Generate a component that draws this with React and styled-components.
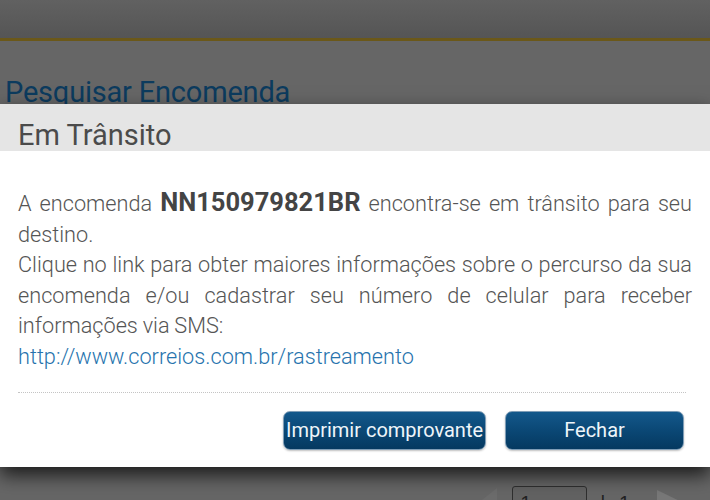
import React from 'react'
import styled, { createGlobalStyle } from 'styled-components'

const GlobalStyle = createGlobalStyle`
  html, body {
    margin: 0;
    padding: 0;
    background: #666666;
  }
  * {
    box-sizing: border-box;
  }
`

const Page = styled.div`
  position: relative;
  width: 710px;
  height: 500px;
  overflow: hidden;
  display: flex;
  flex-direction: column;
  background: #666666;
  font-family: Roboto, "Liberation Sans", sans-serif;
`

const TopBar = styled.div`
  height: 41px;
  flex-shrink: 0;
  background: linear-gradient(#616161, #555555);
  border-bottom: 3px solid #6b5819;
`

const PageTitle = styled.h1`
  margin: 35px 0 0 5px;
  font-size: 29px;
  line-height: 32px;
  font-weight: 400;
  color: #0c3b5e;
  letter-spacing: -0.2px;
`

const Pager = styled.div`
  margin-top: 376px;
  height: 40px;
  display: flex;
  align-items: flex-start;
  justify-content: flex-end;
  padding-right: 20px;
  font-family: "Liberation Sans", Arial, sans-serif;
  color: #222;
`

const Arrow = styled.div`
  width: 0;
  height: 0;
  margin-top: ${p => p.dir === 'left' ? 4 : 6}px;
  border-top: 16px solid transparent;
  border-bottom: 16px solid transparent;
  ${p => p.dir === 'left'
    ? 'border-right: 20px solid #6c6c6c;'
    : 'border-left: 33px solid #787878;'}
`

const PageInput = styled.div`
  width: 75px;
  height: 30px;
  margin: 2px 13px 0 15px;
  border: 1px solid #2f2f2f;
  border-radius: 3px;
  padding: 5px 0 0 7px;
  font-size: 20px;
  background: #626262;
`

const PageCount = styled.span`
  margin: 8px 27px 0 0;
  font-size: 20px;
  word-spacing: 8px;
`

const Dialog = styled.div`
  position: absolute;
  top: 104px;
  left: 0;
  right: 0;
  background: #ffffff;
  box-shadow: 0 8px 18px rgba(0, 0, 0, 0.75);
`

const DialogHeader = styled.div`
  height: 47px;
  padding: 15px 18px 0;
  background: #e5e5e5;
`

const DialogTitle = styled.h2`
  margin: 0;
  font-size: 29px;
  line-height: 32px;
  font-weight: 400;
  color: #4b4b4b;
`

const DialogBody = styled.div`
  padding: 36px 18px 0;
  font-size: 21.7px;
  line-height: 30.5px;
  font-weight: 300;
  word-spacing: -0.5px;
  color: #555555;
  text-align: justify;
`

const Paragraph = styled.p`
  margin: 0;
`

const Code = styled.strong`
  font-size: 25.5px;
  font-weight: 700;
  color: #444444;
`

const TrackLink = styled.a`
  color: #2673ad;
  text-decoration: none;
`

const Footer = styled.div`
  margin: 20px 24px 0 18px;
  border-top: 1px dotted #c4c4c4;
  padding: 18px 2px 17px 0;
  display: flex;
  justify-content: flex-end;
  gap: 19px;
`

const Button = styled.button`
  width: ${p => p.w}px;
  height: 39px;
  padding: 0 0 2px;
  border: 1px solid #7f9db6;
  border-radius: 7px;
  background: linear-gradient(#13588b, #0a4673 55%, #053960);
  box-shadow: 0 1px 2px rgba(0, 0, 0, 0.25);
  color: #eef5fa;
  font-family: Roboto, "Liberation Sans", sans-serif;
  font-size: 20px;
  font-weight: 400;
  white-space: nowrap;
  cursor: pointer;
`

export default function App() {
  return (
    <>
      <GlobalStyle />
      <Page>
        <TopBar />
        <PageTitle>Pesquisar Encomenda</PageTitle>
        <Pager>
          <Arrow dir="left" />
          <PageInput>1</PageInput>
          <PageCount>| 1</PageCount>
          <Arrow dir="right" />
        </Pager>

        <Dialog>
          <DialogHeader>
            <DialogTitle>Em Trânsito</DialogTitle>
          </DialogHeader>
          <DialogBody>
            <Paragraph>
              A encomenda <Code>NN150979821BR</Code> encontra-se em trânsito para seu destino.
            </Paragraph>
            <Paragraph>
              Clique no link para obter maiores informações sobre o percurso da sua encomenda e/ou
              cadastrar seu número de celular para receber informações via SMS:
              <br />
              <TrackLink href="#">http://www.correios.com.br/rastreamento</TrackLink>
            </Paragraph>
          </DialogBody>
          <Footer>
            <Button w={203}>Imprimir comprovante</Button>
            <Button w={179}>Fechar</Button>
          </Footer>
        </Dialog>
      </Page>
    </>
  )
}
